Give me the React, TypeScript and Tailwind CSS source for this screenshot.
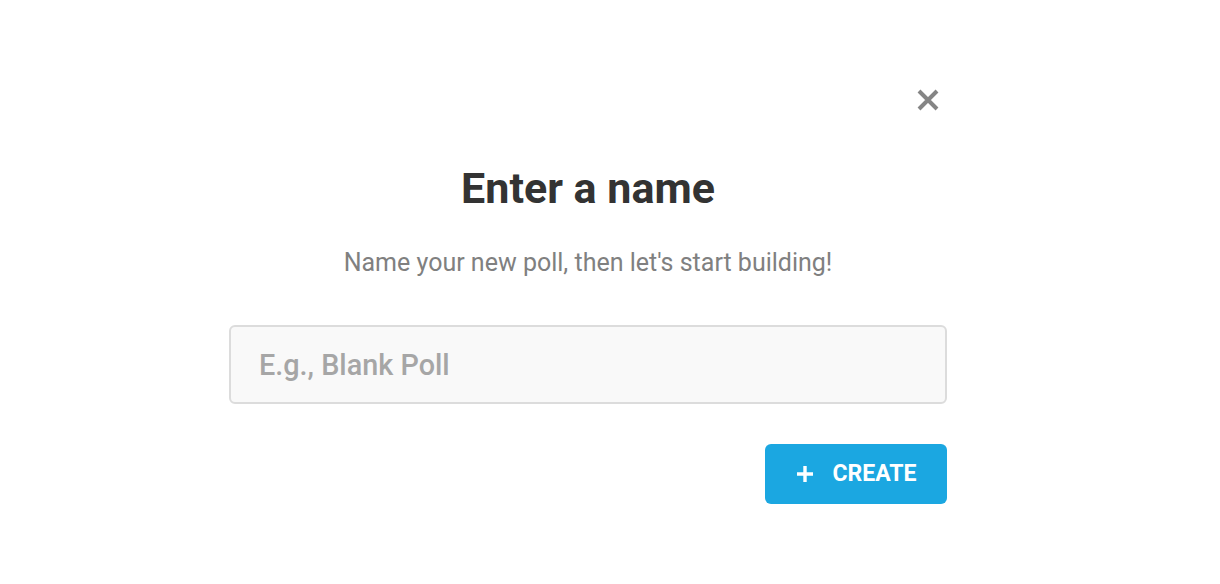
export default function App() {
  return (
    <div className="w-[1220px] h-[584px] bg-white font-['Roboto',sans-serif] overflow-hidden">
      <div className="ml-[229px] w-[718px] pt-[88px] flex flex-col">
        {/* Close */}
        <div className="flex justify-end pr-[7px]">
          <svg width="24" height="24" viewBox="0 0 24 24" className="text-[#858585]">
            <path d="M3 3L21 21M21 3L3 21" stroke="currentColor" strokeWidth="4" strokeLinecap="butt" />
          </svg>
        </div>

        <h1 className="mt-[50px] text-center text-[43px] leading-[52px] font-bold text-[#333333]">
          Enter a name
        </h1>
        <p className="mt-[34px] text-center text-[25px] leading-[30px] text-[#808080]">
          Name your new poll, then let's start building!
        </p>

        <input
          placeholder="E.g., Blank Poll"
          className="mt-[47px] h-[79px] w-full rounded-[6px] border-2 border-[#dcdcdc] bg-[#f9f9f9] px-[28px] text-[28.8px] font-medium text-[#333] placeholder:text-[#a6a6a6] outline-none"
        />

        <div className="mt-[40px] flex justify-end">
          <button className="flex h-[60px] w-[182px] items-center justify-center gap-[19px] rounded-[6px] bg-[#1ba7e1] text-[23px] font-bold text-white">
            <svg width="18" height="18" viewBox="0 0 18 18">
              <path d="M9 1V17M1 9H17" stroke="white" strokeWidth="3.4" />
            </svg>
            <span>CREATE</span>
          </button>
        </div>
      </div>
    </div>
  );
}
